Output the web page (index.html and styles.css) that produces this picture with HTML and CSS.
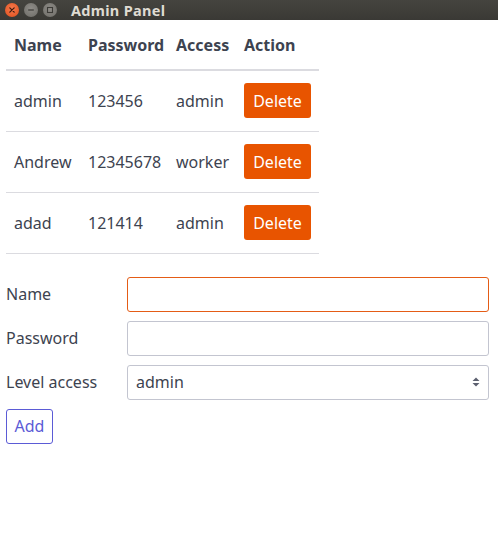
FILE: index.html
```html
<!DOCTYPE html>
<html>
<head>
<meta charset="utf-8">
<link rel="stylesheet" href="styles.css">
</head>
<body>
<div class="titlebar">
  <div class="controls">
    <span class="btn close">
      <svg width="14" height="14" viewBox="0 0 14 14"><path d="M4.8 4.8 L9.2 9.2 M9.2 4.8 L4.8 9.2" stroke="#3a1a10" stroke-width="1.2" stroke-linecap="round"/></svg>
    </span>
    <span class="btn other">
      <svg width="14" height="14" viewBox="0 0 14 14"><path d="M4.2 7 H9.8" stroke="#3c3b37" stroke-width="1.2"/></svg>
    </span>
    <span class="btn other">
      <svg width="14" height="14" viewBox="0 0 14 14"><rect x="4.5" y="4.5" width="5" height="5" fill="none" stroke="#3c3b37" stroke-width="1.1"/></svg>
    </span>
  </div>
  <div class="title">Admin Panel</div>
</div>
<main class="content">
  <table class="users">
    <colgroup><col class="c1"><col class="c2"><col class="c3"><col class="c4"></colgroup>
    <thead>
      <tr><th>Name</th><th>Password</th><th>Access</th><th>Action</th></tr>
    </thead>
    <tbody>
      <tr><td>admin</td><td>123456</td><td>admin</td><td><button class="delete">Delete</button></td></tr>
      <tr><td>Andrew</td><td>12345678</td><td>worker</td><td><button class="delete">Delete</button></td></tr>
      <tr><td>adad</td><td>121414</td><td>admin</td><td><button class="delete">Delete</button></td></tr>
    </tbody>
  </table>
  <form class="form">
    <div class="row"><label>Name</label><input class="field focused" type="text"></div>
    <div class="row"><label>Password</label><input class="field" type="password"></div>
    <div class="row"><label>Level access</label>
      <div class="select">
        <span>admin</span>
        <svg width="8" height="12" viewBox="0 0 8 12"><path d="M4 1.5 L7.5 5 H0.5 Z M4 10.5 L7.5 7 H0.5 Z" fill="#5d6170"/></svg>
      </div>
    </div>
    <div class="actions"><button type="button" class="add">Add</button></div>
  </form>
</main>
</body>
</html>
```
FILE: styles.css
```css
* { box-sizing: border-box; }
html, body { margin: 0; background: #fff; }
body {
  font-family: "Noto Sans", "DejaVu Sans", sans-serif;
  font-size: 16px;
  color: #3d4350;
}
.titlebar {
  height: 20px;
  background: linear-gradient(#45443f, #3a3935);
  display: flex;
  align-items: center;
}
.controls {
  display: flex;
  gap: 5px;
  padding-left: 5px;
  width: 71px;
}
.btn {
  width: 14px;
  height: 14px;
  border-radius: 50%;
  display: flex;
}
.btn.close { background: radial-gradient(circle at 50% 40%, #f47a4d, #e24e1b); }
.btn.other { background: radial-gradient(circle at 50% 40%, #8f8d88, #6d6b66); }
.title {
  color: #dfdbd2;
  font-weight: bold;
  font-size: 14.5px;
  letter-spacing: 0.3px;
}
.content { padding: 0 9px 0 6px; }
.users {
  border-collapse: collapse;
  table-layout: fixed;
  width: 313px;
}
.c1 { width: 74px; }
.c2 { width: 88px; }
.c3 { width: 68px; }
.c4 { width: 83px; }
.users th {
  text-align: left;
  font-weight: bold;
  height: 50px;
  padding: 0 8px;
  border-bottom: 2px solid #dbdbe0;
  white-space: nowrap;
}
.users td {
  height: 61px;
  padding: 0 8px;
  border-bottom: 1px solid #dbdbe0;
  white-space: nowrap;
}
.delete {
  background: #e85400;
  color: #fff;
  border: 0;
  border-radius: 3px;
  font-family: inherit;
  font-size: 16px;
  height: 35px;
  width: 67px;
  padding: 0;
  display: block;
}
.form {
  display: flex;
  flex-direction: column;
  gap: 9px;
  margin-top: 23px;
}
.row {
  display: flex;
  align-items: center;
}
.row label { width: 121px; flex: none; }
.field, .select {
  flex: 1;
  height: 35px;
  border: 1px solid #c3c5d0;
  border-radius: 3px;
  background: #fff;
  font-family: inherit;
  font-size: 16px;
}
.field.focused { border-color: #e45c16; }
.select {
  display: flex;
  align-items: center;
  justify-content: space-between;
  padding: 0 8px 0 8px;
}
.add {
  height: 35px;
  width: 47px;
  background: #fff;
  border: 1px solid #5b5bd6;
  color: #5b5bd6;
  border-radius: 3px;
  font-family: inherit;
  font-size: 16px;
  padding: 0;
}
```
